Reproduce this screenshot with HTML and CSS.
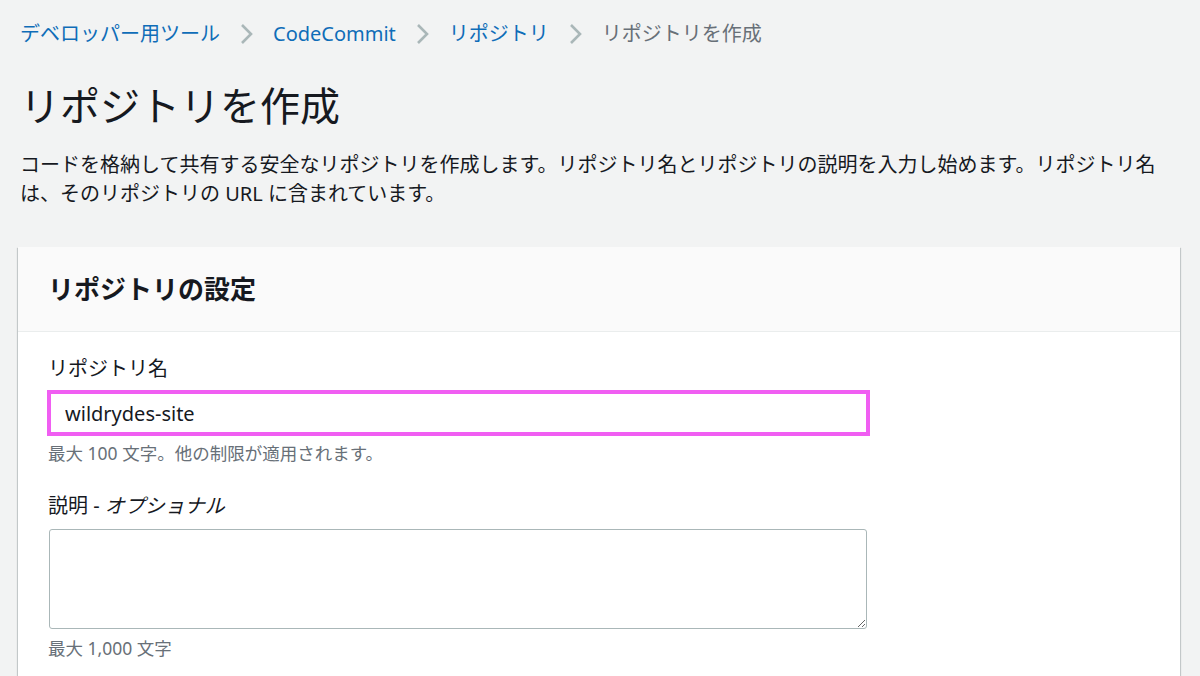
FILE: index.html
```html
<!DOCTYPE html>
<html lang="ja">
<head>
  <meta charset="UTF-8" />
  <meta name="viewport" content="width=device-width, initial-scale=1.0"/>
  <title>リポジトリを作成</title>
  <link rel="stylesheet" href="styles.css">
</head>
<body>
<nav class="breadcrumbs">
  <a href="#" class="crumb-link">デベロッパー用ツール</a>
  <svg class="chevron" viewBox="0 0 13 22" width="13" height="22"><path d="M2 2 L11 11 L2 20" fill="none" stroke="#aab7b8" stroke-width="2.6"/></svg>
  <a href="#" class="crumb-link">CodeCommit</a>
  <svg class="chevron" viewBox="0 0 13 22" width="13" height="22"><path d="M2 2 L11 11 L2 20" fill="none" stroke="#aab7b8" stroke-width="2.6"/></svg>
  <a href="#" class="crumb-link">リポジトリ</a>
  <svg class="chevron" viewBox="0 0 13 22" width="13" height="22"><path d="M2 2 L11 11 L2 20" fill="none" stroke="#aab7b8" stroke-width="2.6"/></svg>
  <span class="crumb-current">リポジトリを作成</span>
</nav>

<h1 class="page-title">リポジトリを作成</h1>
<p class="page-desc">コードを格納して共有する安全なリポジトリを作成します。リポジトリ名とリポジトリの説明を入力し始めます。リポジトリ名は、そのリポジトリの URL に含まれています。</p>

<div class="card">
  <div class="card-header">
    <h2>リポジトリの設定</h2>
  </div>
  <div class="card-body">
    <label class="field-label" for="repoName">リポジトリ名</label>
    <input type="text" id="repoName" class="text-input highlighted" value="wildrydes-site">
    <div class="hint">最大 100 文字。他の制限が適用されます。</div>

    <label class="field-label second" for="repoDesc">説明 - <em>オプショナル</em></label>
    <textarea id="repoDesc" class="text-area"></textarea>
    <div class="hint hint-tight">最大 1,000 文字</div>
  </div>
</div>
</body>
</html>
```

FILE: styles.css
```css
body {
  font-family: "Noto Sans", "Noto Sans CJK JP", sans-serif;
  background-color: #f2f3f3;
  color: #16191f;
  margin: 0;
  padding: 20px 20px 0 20px;
}
.breadcrumbs {
  display: flex;
  align-items: center;
  gap: 20px;
  font-size: 20px;
  line-height: 28px;
}
.crumb-link {
  color: #0f6db8;
  text-decoration: none;
}
.crumb-current {
  color: #687078;
}
.chevron {
  display: block;
}
.page-title {
  font-size: 40px;
  font-weight: 400;
  line-height: 50px;
  margin: 33px 0 0 0;
  color: #16191f;
}
.page-desc {
  font-size: 20px;
  line-height: 29px;
  margin: 19px 0 0 0;
  color: #16191f;
}
.card {
  margin: 39px 0 0 -2px;
  width: 1162px;
  background: #fff;
  box-shadow: 0 1px 1px 0 rgba(0, 28, 36, 0.3), 1px 1px 1px 0 rgba(0, 28, 36, 0.15), -1px 1px 1px 0 rgba(0, 28, 36, 0.15);
}
.card-header {
  height: 84px;
  display: flex;
  align-items: center;
  padding: 0 30px;
  background: #fafafa;
  border-bottom: 1px solid #eaeded;
}
.card-header h2 {
  margin: 0;
  font-size: 26px;
  font-weight: 700;
  line-height: 34px;
}
.card-body {
  padding: 23px 30px 60px 30px;
  display: flex;
  flex-direction: column;
  align-items: flex-start;
}
.field-label {
  font-size: 20px;
  line-height: 28px;
  color: #16191f;
}
.field-label.second {
  margin-top: 27px;
}
.field-label em {
  font-style: italic;
}
.text-input {
  margin: 7px 0 0 -1px;
  width: 823px;
  height: 46px;
  box-sizing: border-box;
  padding: 0 14px;
  font-family: inherit;
  font-size: 20px;
  color: #16191f;
  background: #fff;
  border: 1px solid #aab7b8;
  border-radius: 2px;
  outline: none;
}
.text-input.highlighted {
  border: 4px solid #f05ef2;
  border-radius: 0;
}
.hint {
  margin-top: 5px;
  font-size: 17.5px;
  line-height: 24px;
  color: #687078;
}
.hint-tight {
  margin-top: 7px;
}
.text-area {
  margin: 9px 0 0 1px;
  width: 818px;
  height: 100px;
  box-sizing: border-box;
  font-family: inherit;
  font-size: 20px;
  border: 1px solid #aab7b8;
  border-radius: 3px;
  background: #fff;
}
```
